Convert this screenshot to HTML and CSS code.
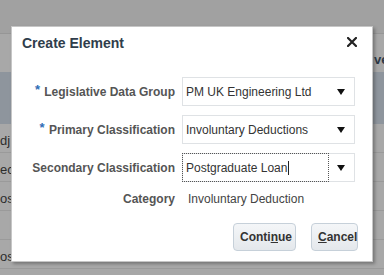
FILE: index.html
```html
<!DOCTYPE html>
<html lang="en">
<head>
    <meta charset="UTF-8">
    <title>Create Element</title>
    <link rel="stylesheet" href="styles.css">
</head>
<body>
<div class="page">
    <div class="topbar"></div>
    <div class="subbar"><span class="peek">ve</span></div>
    <div class="band"></div>
    <div class="row"><span>dj</span></div>
    <div class="row"><span>ec</span></div>
    <div class="row"><span>os</span></div>
    <div class="row"><span></span></div>
    <div class="row"><span>os</span></div>
</div>

<div class="dialog">
    <div class="dialog-head">
        <h1>Create Element</h1>
        <svg class="close" width="10" height="10" viewBox="0 0 10 10">
            <path d="M1 1 L9 9 M9 1 L1 9" stroke="#222" stroke-width="2.2" stroke-linecap="square"/>
        </svg>
    </div>

    <div class="form">
        <label class="req"><i>*</i> Legislative Data Group</label>
        <div class="combo">
            <div class="combo-input">PM UK Engineering Ltd</div>
            <div class="combo-btn"><b></b></div>
        </div>

        <label class="req"><i>*</i> Primary Classification</label>
        <div class="combo">
            <div class="combo-input">Involuntary Deductions</div>
            <div class="combo-btn"><b></b></div>
        </div>

        <label>Secondary Classification</label>
        <div class="combo">
            <div class="combo-input focused">Postgraduate Loan<span class="caret"></span></div>
            <div class="combo-btn"><b></b></div>
        </div>

        <label class="plain">Category</label>
        <div class="value">Involuntary Deduction</div>
    </div>

    <div class="buttons">
        <button class="btn">Conti<u>n</u>ue</button>
        <button class="btn"><u>C</u>ancel</button>
    </div>
</div>
</body>
</html>
```

FILE: styles.css
```css
body{
    margin:0;
    padding:0;
    width:384px;
    height:275px;
    overflow:hidden;
    background:#a7a7a7;
    font-family:"Liberation Sans", Arial, sans-serif;
    position:relative;
}

/* dimmed page behind the dialog */
.page{
    display:flex;
    flex-direction:column;
}

.topbar{
    height:33px;
    background:#a1a1a1;
    border-bottom:1px solid #969696;
}

.subbar{
    height:38px;
    background:#a8a8a8;
    position:relative;
}

.peek{
    position:absolute;
    left:374px;
    top:18px;
    font-size:13px;
    font-weight:bold;
    color:#2c3846;
}

.band{
    height:52px;
    background:#8e959d;
}

.row{
    height:24px;
    border-bottom:1px solid #9a9a9a;
    background:#a8a8a8;
    font-size:13px;
    color:#2c2c2c;
    display:flex;
    align-items:center;
    padding-top:4px;
}

.row:first-of-type{
    height:29px;
}

/* dialog */
.dialog{
    position:absolute;
    left:11px;
    top:26px;
    width:360px;
    height:234px;
    background:#fff;
    border:1px solid #c6c6c6;
    box-shadow:2px 2px 3px rgba(60,60,60,0.45);
    display:flex;
    flex-direction:column;
}

.dialog-head{
    display:flex;
    justify-content:space-between;
    align-items:center;
    padding:7px 15px 0 10px;
}

.dialog-head h1{
    margin:0;
    font-size:14px;
    line-height:18px;
    font-weight:bold;
    color:#2f3d4b;
}

.close{
    margin-top:-2px;
}

.form{
    display:grid;
    grid-template-columns:163px 173px;
    column-gap:7px;
    row-gap:9px;
    margin-top:25px;
    align-items:center;
}

.form label{
    text-align:right;
    font-size:12px;
    font-weight:bold;
    color:#555;
    white-space:nowrap;
}

.form label i{
    font-style:normal;
    color:#2f6db6;
    font-size:13px;
    position:relative;
    top:-2px;
    margin-right:1px;
}

.combo{
    display:flex;
    height:29px;
    box-sizing:border-box;
    border:1px solid #dfe2e5;
}

.combo-input{
    flex:1;
    display:flex;
    align-items:center;
    padding-left:3px;
    font-size:12px;
    color:#333;
    white-space:nowrap;
}

.combo-input.focused{
    outline:1px dotted #555;
    outline-offset:0;
}

.caret{
    display:inline-block;
    width:1px;
    height:14px;
    background:#222;
    margin-left:1px;
}

.combo-btn{
    width:26px;
    display:flex;
    align-items:center;
    justify-content:center;
}

.combo-btn b{
    width:0;
    height:0;
    border-left:4px solid transparent;
    border-right:4px solid transparent;
    border-top:6px solid #111;
    margin-left:0;
}

.value{
    font-size:12px;
    color:#444;
    padding-left:6px;
    line-height:15px;
    margin-top:1px;
}

.buttons{
    display:flex;
    justify-content:flex-end;
    gap:15px;
    padding:0 14px 0 0;
    margin-top:16px;
}

.btn{
    height:28px;
    padding:0 6px;
    font-family:"Liberation Sans", Arial, sans-serif;
    font-size:12px;
    font-weight:bold;
    color:#333;
    background:linear-gradient(#f4f6f8, #e4e8ec);
    border:1px solid #c6d0d9;
    border-radius:4px;
}

.btn:first-child{
    width:63px;
}

.btn:last-child{
    width:47px;
}
```
